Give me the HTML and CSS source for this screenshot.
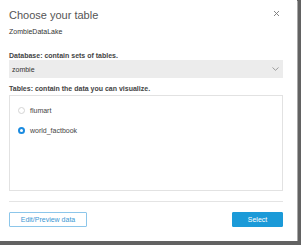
FILE: index.html
```html
<!DOCTYPE html>
<html lang="en">
<head>
    <meta charset="UTF-8">
    <title>Choose your table</title>
    <link rel="stylesheet" href="styles.css">
</head>
<body>
    <div class="dialog">
        <div class="header">
            <h1>Choose your table</h1>
            <span class="close">
                <svg width="7" height="7" viewBox="0 0 7 7"><path d="M1 1L6 6M6 1L1 6" stroke="#777" stroke-width="0.9" fill="none"/></svg>
            </span>
        </div>
        <div class="source">ZombieDataLake</div>

        <label class="field-label">Database: contain sets of tables.</label>
        <div class="select">
            <span>zombie</span>
            <svg width="7" height="4" viewBox="0 0 7 4"><path d="M0.5 0.5L3.5 3.3L6.5 0.5" stroke="#888" stroke-width="0.8" fill="none"/></svg>
        </div>

        <label class="field-label tables-label">Tables: contain the data you can visualize.</label>
        <div class="table-list">
            <div class="table-item">
                <span class="radio"></span>
                <span>flumart</span>
            </div>
            <div class="table-item">
                <span class="radio checked"></span>
                <span>world_factbook</span>
            </div>
        </div>

        <div class="divider"></div>

        <div class="footer">
            <button class="btn btn-outline">Edit/Preview data</button>
            <button class="btn btn-primary">Select</button>
        </div>
    </div>
</body>
</html>
```

FILE: styles.css
```css
body {
    margin: 0;
    background-color: #626262;
    font-family: "Liberation Sans", Arial, sans-serif;
}
.dialog {
    width: 297px;
    height: 241px;
    box-sizing: border-box;
    padding: 8px 14px 0 9px;
    background-color: #fff;
    box-shadow: 1px 1px 0 #a8a8a8;
}
.header {
    display: flex;
    justify-content: space-between;
    align-items: center;
    height: 14px;
}
h1 {
    margin: 0;
    font-size: 11px;
    font-weight: normal;
    line-height: 14px;
    color: #555;
}
.close {
    display: flex;
    margin-right: 3px;
    margin-top: -4px;
}
.source {
    margin-top: 5px;
    font-size: 7px;
    line-height: 9px;
    color: #333;
}
.field-label {
    display: block;
    margin-top: 16px;
    font-size: 7px;
    line-height: 8px;
    font-weight: bold;
    color: #444;
}
.tables-label {
    margin-top: 7px;
}
.select {
    display: flex;
    justify-content: space-between;
    align-items: center;
    height: 18px;
    padding: 0 4px 0 3px;
    background-color: #ececec;
    font-size: 7px;
    color: #333;
}
.table-list {
    margin-top: 2px;
    height: 96px;
    box-sizing: border-box;
    padding-top: 10px;
    border: 1px solid #e2e2e2;
}
.table-item {
    display: flex;
    align-items: center;
    gap: 5px;
    height: 8px;
    margin-bottom: 12px;
    padding-left: 8px;
    font-size: 7px;
    color: #444;
}
.radio {
    width: 7px;
    height: 7px;
    box-sizing: border-box;
    border-radius: 50%;
    border: 1px solid #d4d4d4;
    background-color: #fff;
}
.radio.checked {
    border: 2.5px solid #1b8be0;
    background-color: #fff;
}
.divider {
    margin-top: 10px;
    height: 1px;
    background-color: #e4e4e4;
}
.footer {
    display: flex;
    justify-content: space-between;
    margin-top: 10px;
}
.btn {
    height: 15px;
    padding: 0;
    border-radius: 1px;
    font-family: "Liberation Sans", Arial, sans-serif;
    font-size: 7px;
    cursor: pointer;
}
.btn-outline {
    width: 78px;
    background-color: #fff;
    border: 1px solid #8cc6ea;
    color: #3b97d3;
}
.btn-primary {
    width: 51px;
    background-color: #1b9ad8;
    border: 1px solid #1b9ad8;
    color: #fff;
}
```
